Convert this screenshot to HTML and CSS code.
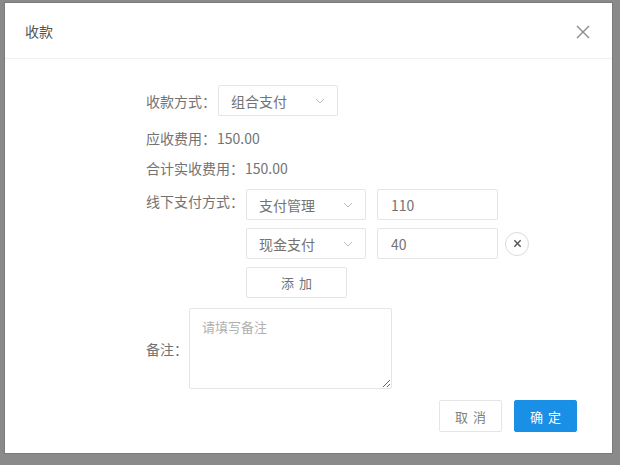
FILE: index.html
```html
<!DOCTYPE html>
<html lang="zh-CN">
<head>
    <meta charset="UTF-8">
    <title>收款</title>
    <link rel="stylesheet" href="styles.css">
</head>
<body>
    <div class="mask">
        <div class="dialog">
            <div class="dialog-header">
                <span class="dialog-title">收款</span>
                <svg class="close" viewBox="0 0 14 14" width="14" height="14"><path d="M1 1 L13 13 M13 1 L1 13" stroke="#8a8a8a" stroke-width="1.4"/></svg>
            </div>

            <div class="dialog-body">
                <div class="row row-first">
                    <span class="label">收款方式：</span>
                    <div class="select select-wide">
                        <span>组合支付</span>
                        <svg class="arrow" viewBox="0 0 10 6" width="10" height="6"><path d="M1 1 L5 5 L9 1" fill="none" stroke="#bbb" stroke-width="1"/></svg>
                    </div>
                </div>

                <div class="row row-text">
                    <span class="label">应收费用：</span>
                    <span class="value">150.00</span>
                </div>

                <div class="row row-text row-text2">
                    <span class="label">合计实收费用：</span>
                    <span class="value">150.00</span>
                </div>

                <div class="row row-pay">
                    <span class="label label-top">线下支付方式：</span>
                    <div class="pay-list">
                        <div class="pay-item">
                            <div class="select">
                                <span>支付管理</span>
                                <svg class="arrow" viewBox="0 0 10 6" width="10" height="6"><path d="M1 1 L5 5 L9 1" fill="none" stroke="#bbb" stroke-width="1"/></svg>
                            </div>
                            <input class="amount" type="text" value="110">
                        </div>
                        <div class="pay-item">
                            <div class="select">
                                <span>现金支付</span>
                                <svg class="arrow" viewBox="0 0 10 6" width="10" height="6"><path d="M1 1 L5 5 L9 1" fill="none" stroke="#bbb" stroke-width="1"/></svg>
                            </div>
                            <input class="amount" type="text" value="40">
                            <span class="remove">
                                <svg viewBox="0 0 10 10" width="9" height="9"><path d="M1.5 1.5 L8.5 8.5 M8.5 1.5 L1.5 8.5" stroke="#555" stroke-width="1.6"/></svg>
                            </span>
                        </div>
                        <button class="btn btn-add" type="button">添加</button>
                    </div>
                </div>

                <div class="row row-note">
                    <span class="label">备注：</span>
                    <textarea class="note" placeholder="请填写备注"></textarea>
                </div>
            </div>

            <div class="dialog-footer">
                <button class="btn btn-cancel" type="button">取消</button>
                <button class="btn btn-ok" type="button">确定</button>
            </div>
        </div>
    </div>
</body>
</html>
```

FILE: styles.css
```css
* {
    box-sizing: border-box;
}
body {
    margin: 0;
    font-family: "Noto Sans CJK SC", "Noto Sans", sans-serif;
    font-size: 14px;
    color: #737373;
}
.mask {
    width: 620px;
    height: 465px;
    background-color: #8a8a8a;
    padding: 3px 8px 12px 5px;
}
.dialog {
    background-color: #fff;
    height: 450px;
    display: flex;
    flex-direction: column;
    box-shadow: 0 0 0 1px #7a7a7a;
}
.dialog-header {
    height: 56px;
    display: flex;
    align-items: center;
    justify-content: space-between;
    padding: 0 22px 0 20px;
    border-bottom: 1px solid #f0f0f0;
}
.dialog-title {
    font-size: 14px;
    color: #555;
}
.close {
    margin-top: 2px;
}
.dialog-body {
    flex: 1;
    padding: 26px 0 0 141px;
}
.row {
    display: flex;
    align-items: center;
}
.label {
    white-space: nowrap;
}
.value {
    margin-left: 1px;
}
.row-text {
    margin-top: 12px;
    line-height: 20px;
}
.row-text2 {
    margin-top: 10px;
}
.row-pay {
    margin-top: 11px;
    align-items: flex-start;
}
.label-top {
    line-height: 24px;
    margin-right: 2px;
}
.select {
    width: 120px;
    height: 31px;
    border: 1px solid #e5e5e5;
    border-radius: 2px;
    display: flex;
    align-items: center;
    justify-content: space-between;
    padding: 0 12px 0 12px;
    color: #737373;
}
.select-wide {
    margin-left: 2px;
}
.pay-list {
    display: flex;
    flex-direction: column;
    gap: 8px;
}
.pay-item {
    display: flex;
    align-items: center;
}
.amount {
    width: 121px;
    height: 31px;
    margin-left: 11px;
    border: 1px solid #e5e5e5;
    border-radius: 2px;
    padding: 0 13px;
    font-family: inherit;
    font-size: 14px;
    color: #737373;
}
.remove {
    width: 24px;
    height: 24px;
    margin-left: 7px;
    border: 1px solid #dadada;
    border-radius: 50%;
    display: flex;
    align-items: center;
    justify-content: center;
}
.btn {
    font-family: inherit;
    font-size: 13px;
    letter-spacing: 5px;
    text-indent: 5px;
    border-radius: 2px;
    cursor: pointer;
}
.btn-add {
    width: 101px;
    height: 31px;
    background-color: #fff;
    border: 1px solid #e5e5e5;
    color: #737373;
}
.row-note {
    margin-top: 10px;
}
.note {
    width: 203px;
    height: 81px;
    margin-left: 1px;
    border: 1px solid #e5e5e5;
    border-radius: 2px;
    padding: 8px 12px;
    font-family: inherit;
    font-size: 13px;
    color: #737373;
}
.note::placeholder {
    color: #b0b0b0;
}
.dialog-footer {
    display: flex;
    justify-content: flex-end;
    gap: 12px;
    padding: 0 35px 21px 0;
}
.btn-cancel {
    width: 63px;
    height: 32px;
    background-color: #fff;
    border: 1px solid #e5e5e5;
    color: #808080;
}
.btn-ok {
    width: 63px;
    height: 32px;
    background-color: #1a8fe6;
    border: 1px solid #1a8fe6;
    color: #fff;
}
```
